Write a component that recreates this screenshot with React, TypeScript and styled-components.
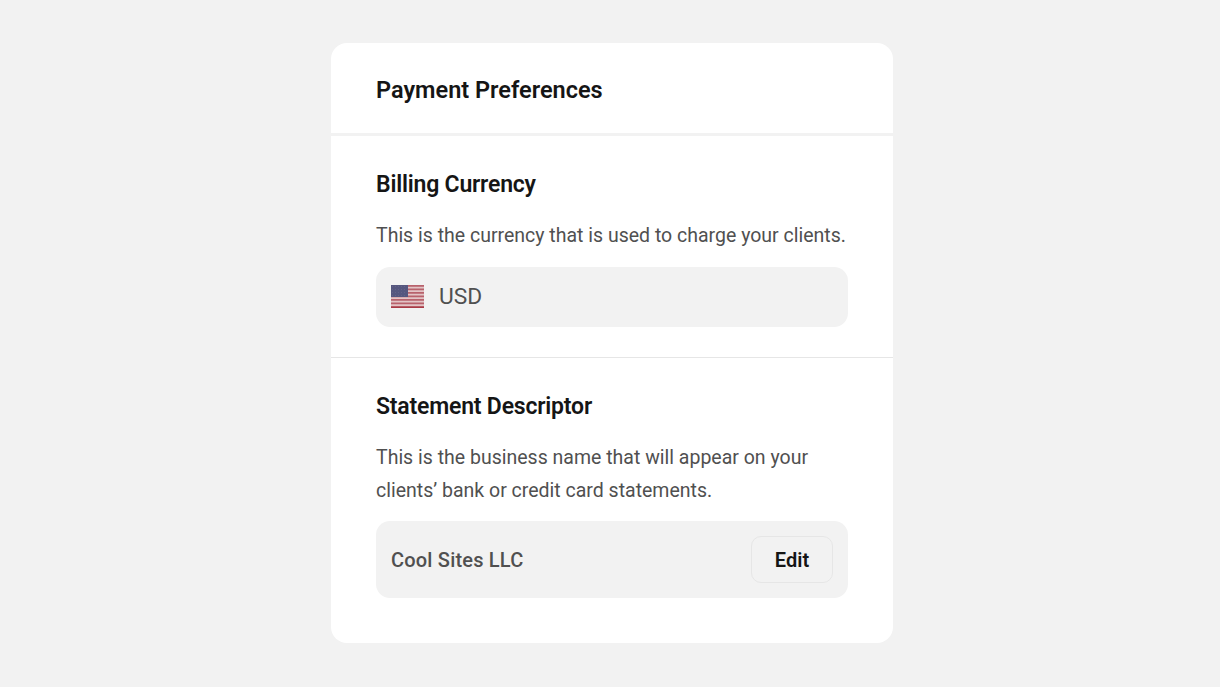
import React from 'react'
import styled, { createGlobalStyle } from 'styled-components'

const GlobalStyle = createGlobalStyle`
  html, body {
    margin: 0;
    padding: 0;
    height: 100%;
    background: #f2f2f2;
    font-family: Roboto, "Liberation Sans", sans-serif;
  }
  * {
    box-sizing: border-box;
  }
`

const Page = styled.div`
  display: flex;
  justify-content: center;
  padding: 43px 0 0 4px;
  min-height: 687px;
`

const Card = styled.div`
  width: 562px;
  height: 600px;
  background: #fff;
  border-radius: 16px;
  overflow: hidden;
`

const Header = styled.div`
  height: 93px;
  padding: 4px 45px 0;
  display: flex;
  align-items: center;
  border-bottom: 3px solid #f2f2f2;
  font-size: 23.5px;
  font-weight: 600;
  line-height: 30px;
  color: #151515;
`

const Section = styled.section<{ $divided?: boolean }>`
  padding: 30px 45px;
  border-bottom: ${(p) => (p.$divided ? '1px solid #e6e6e6' : 'none')};
`

const Heading = styled.h3`
  margin: 0;
  font-size: 23px;
  line-height: 38px;
  font-weight: 600;
  letter-spacing: -0.2px;
  color: #151515;
`

const Description = styled.p`
  margin: 16px 0 14px;
  font-size: 19.5px;
  line-height: 32.75px;
  color: #505050;
`

const CurrencyRow = styled.div`
  height: 60px;
  padding: 0 15px;
  display: flex;
  align-items: center;
  gap: 15px;
  background: #f2f2f2;
  border-radius: 14px;
  font-size: 22.75px;
  color: #505050;
`

const DescriptorRow = styled.div`
  height: 77px;
  padding: 0 15px;
  display: flex;
  align-items: center;
  justify-content: space-between;
  background: #f2f2f2;
  border-radius: 14px;
  font-size: 20px;
  font-weight: 500;
  letter-spacing: 0.2px;
  color: #505050;
`

const EditButton = styled.button`
  width: 82px;
  height: 47px;
  background: transparent;
  border: 1px solid #e6e6e6;
  border-radius: 10px;
  font-family: inherit;
  font-size: 20px;
  font-weight: 600;
  color: #151515;
`

const FlagIcon = styled.svg`
  flex: none;
  filter: blur(0.4px);
`

const stripes = [0, 3.5, 7, 10.5, 14, 17.5]
const stars = [1.5, 4.5, 7.5, 10.5, 13.5].flatMap((x) =>
  [1.5, 4.5, 7.5, 10.5].map((y) => ({ x, y }))
)

const Flag = () => (
  <FlagIcon width="33" height="23" viewBox="0 0 33 23" aria-hidden="true">
    <rect width="33" height="23" fill="#e3c4c6" />
    {stripes.map((y) => (
      <rect key={y} y={y} width="33" height="1.75" fill="#b8626c" />
    ))}
    <rect y="21.25" width="33" height="1.75" fill="#a93a46" />
    <rect width="17" height="12" fill="#56577f" />
    {stars.map((s) => (
      <circle key={`${s.x}-${s.y}`} cx={s.x} cy={s.y} r="0.6" fill="#666689" />
    ))}
  </FlagIcon>
)

export default function App() {
  return (
    <>
      <GlobalStyle />
      <Page>
        <Card>
          <Header>Payment Preferences</Header>
          <Section $divided>
            <Heading>Billing Currency</Heading>
            <Description>This is the currency that is used to charge your clients.</Description>
            <CurrencyRow>
              <Flag />
              USD
            </CurrencyRow>
          </Section>
          <Section>
            <Heading>Statement Descriptor</Heading>
            <Description>
              This is the business name that will appear on your
              <br />
              clients’ bank or credit card statements.
            </Description>
            <DescriptorRow>
              Cool Sites LLC
              <EditButton>Edit</EditButton>
            </DescriptorRow>
          </Section>
        </Card>
      </Page>
    </>
  )
}
